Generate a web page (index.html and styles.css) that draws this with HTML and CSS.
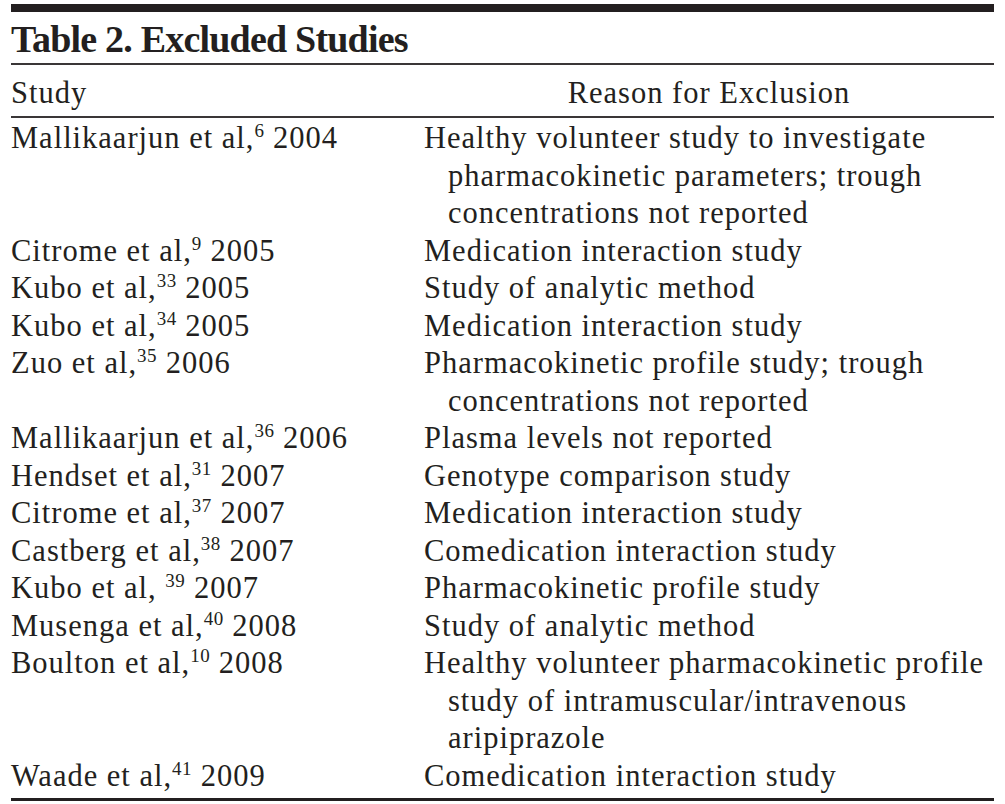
FILE: index.html
```html
<!DOCTYPE html>
<html>
<head>
<meta charset="utf-8">
<link rel="stylesheet" href="styles.css">
</head>
<body>
<div class="table-wrap">
  <h1 class="title">Table 2. Excluded Studies</h1>
  <div class="head">
    <div class="c1">Study</div>
    <div class="c2 center">Reason for Exclusion</div>
  </div>
  <div class="body">
    <div class="row"><div class="c1">Mallikaarjun et al,<sup>6</sup> 2004</div><div class="c2"><span class="hang">Healthy volunteer study to investigate pharmacokinetic parameters; trough concentrations not reported</span></div></div>
    <div class="row"><div class="c1">Citrome et al,<sup>9</sup> 2005</div><div class="c2">Medication interaction study</div></div>
    <div class="row"><div class="c1">Kubo et al,<sup>33</sup> 2005</div><div class="c2">Study of analytic method</div></div>
    <div class="row"><div class="c1">Kubo et al,<sup>34</sup> 2005</div><div class="c2">Medication interaction study</div></div>
    <div class="row"><div class="c1">Zuo et al,<sup>35</sup> 2006</div><div class="c2"><span class="hang">Pharmacokinetic profile study; trough concentrations not reported</span></div></div>
    <div class="row"><div class="c1">Mallikaarjun et al,<sup>36</sup> 2006</div><div class="c2">Plasma levels not reported</div></div>
    <div class="row"><div class="c1">Hendset et al,<sup>31</sup> 2007</div><div class="c2">Genotype comparison study</div></div>
    <div class="row"><div class="c1">Citrome et al,<sup>37</sup> 2007</div><div class="c2">Medication interaction study</div></div>
    <div class="row"><div class="c1">Castberg et al,<sup>38</sup> 2007</div><div class="c2">Comedication interaction study</div></div>
    <div class="row"><div class="c1">Kubo et al, <sup>39</sup> 2007</div><div class="c2">Pharmacokinetic profile study</div></div>
    <div class="row"><div class="c1">Musenga et al,<sup>40</sup> 2008</div><div class="c2">Study of analytic method</div></div>
    <div class="row"><div class="c1">Boulton et al,<sup>10</sup> 2008</div><div class="c2"><span class="hang">Healthy volunteer pharmacokinetic profile study of intramuscular/intravenous aripiprazole</span></div></div>
    <div class="row"><div class="c1">Waade et al,<sup>41</sup> 2009</div><div class="c2">Comedication interaction study</div></div>
  </div>
</div>
</body>
</html>
```
FILE: styles.css
```css
html, body {
  margin: 0;
  padding: 0;
  background: #ffffff;
}
body {
  padding: 4px 11px 0 11px;
  font-family: "Liberation Serif", "Times New Roman", serif;
  color: #231f20;
}
.table-wrap {
  width: 983px;
  border-top: 8px solid #231f20;
  border-bottom: 3px solid #231f20;
}
.title {
  margin: 0;
  padding-top: 4px;
  font-size: 38px;
  font-weight: bold;
  line-height: 47px;
  letter-spacing: -0.8px;
  border-bottom: 2px solid #3a3637;
}
.head {
  display: grid;
  grid-template-columns: 413px 1fr;
  padding-top: 5px;
  font-size: 30.5px;
  line-height: 46px;
  letter-spacing: 1px;
  border-bottom: 2px solid #3a3637;
}
.center {
  text-align: center;
}
.body {
  font-size: 30.5px;
  line-height: 37.5px;
  letter-spacing: 1px;
  padding-top: 2px;
  padding-bottom: 3px;
}
.row {
  display: grid;
  grid-template-columns: 413px 1fr;
}
.hang {
  display: block;
  padding-left: 24px;
  text-indent: -24px;
}
sup {
  font-size: 19px;
  line-height: 0;
  letter-spacing: 0.5px;
  vertical-align: 0;
  position: relative;
  top: -11px;
}
```
